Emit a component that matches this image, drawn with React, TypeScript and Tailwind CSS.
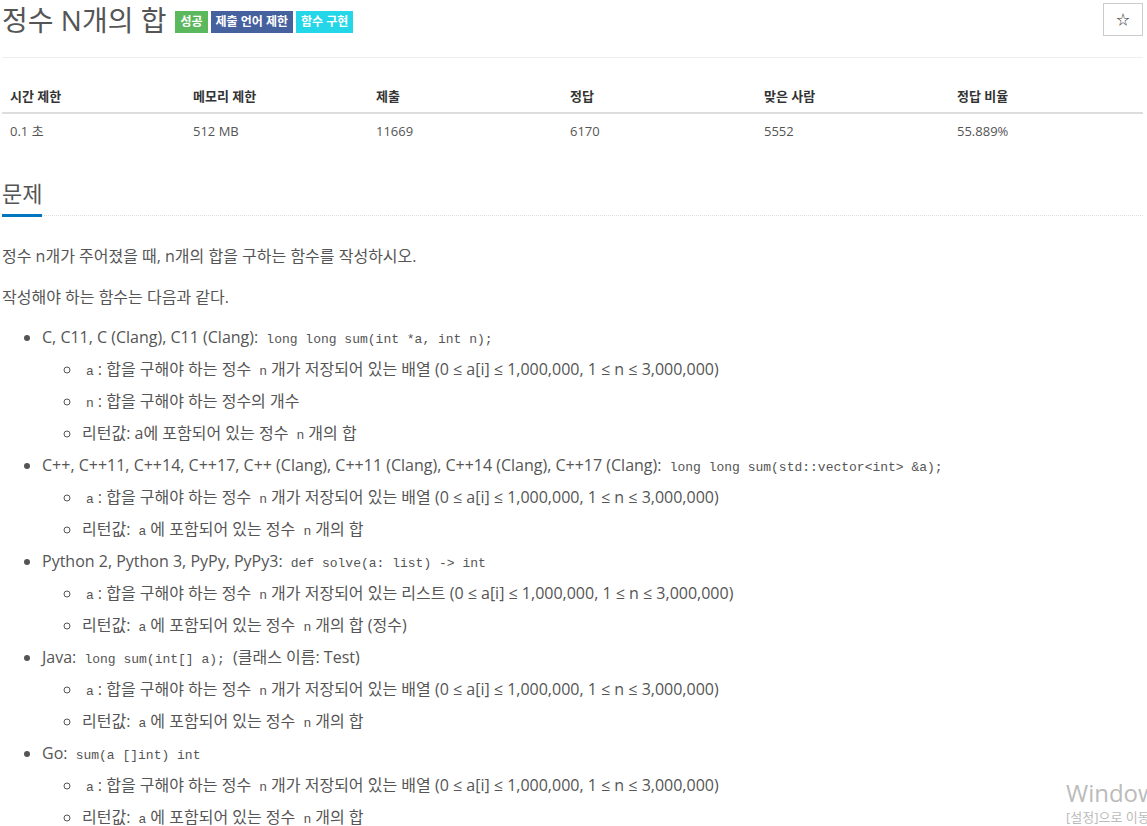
import React from "react";

// inline code in the problem text
const C = ({ children }: { children: React.ReactNode }) => (
  <code className="px-1 font-['Liberation_Mono',monospace] text-[13px] leading-none text-[#555]">{children}</code>
);

const Range = ({ list }: { list?: boolean }) => (
  <>
    <C>a</C>: 합을 구해야 하는 정수 <C>n</C>개가 저장되어 있는 {list ? "리스트" : "배열"} (0 ≤ a[i] ≤ 1,000,000, 1 ≤ n ≤ 3,000,000)
  </>
);

const Ret = ({ suffix }: { suffix?: string }) => (
  <li>
    리턴값: <C>a</C>에 포함되어 있는 정수 <C>n</C>개의 합{suffix}
  </li>
);

const stats = [
  { label: "시간 제한", value: "0.1 초", w: "w-[183px]" },
  { label: "메모리 제한", value: "512 MB", w: "w-[183px]" },
  { label: "제출", value: "11669", w: "w-[194px]" },
  { label: "정답", value: "6170", w: "w-[194px]" },
  { label: "맞은 사람", value: "5552", w: "w-[193px]" },
  { label: "정답 비율", value: "55.889%", w: "" },
];

export default function App() {
  return (
    <div className="relative h-[826px] overflow-hidden bg-white font-['Open_Sans','Noto_Sans_CJK_KR',sans-serif] text-[#555]">
      <div className="pl-[2px] pr-[4px]">
        {/* title */}
        <div className="flex items-start justify-between border-b border-[#eee] pb-[19px]">
          <div className="flex items-center pt-[2px]">
            <h1 className="text-[28px] leading-[36px] text-[#555]">정수 N개의 합</h1>
            <div className="ml-[9px] mt-[4px] flex gap-[3px] text-[12px] font-bold text-white">
              <span className="flex h-[22px] items-center bg-[#5cb85c] px-[5px]">성공</span>
              <span className="flex h-[22px] items-center bg-[#45619e] px-[5px]">제출 언어 제한</span>
              <span className="flex h-[22px] items-center bg-[#23d6e8] px-[5px]">함수 구현</span>
            </div>
          </div>
          <button className="mt-[3px] flex h-[33px] w-[40px] items-center justify-center border border-[#ccc] bg-white text-[13px] text-[#333]">
            ☆
          </button>
        </div>

        {/* stats table */}
        <table className="mt-[22px] w-full border-collapse text-left text-[13px]">
          <thead>
            <tr className="border-b-2 border-[#ddd]">
              {stats.map((s) => (
                <th key={s.label} className={`${s.w} px-2 py-[8px] font-bold leading-[16px] text-[#333]`}>
                  {s.label}
                </th>
              ))}
            </tr>
          </thead>
          <tbody>
            <tr>
              {stats.map((s) => (
                <td key={s.label} className="px-2 py-[8px] leading-[18px]">
                  {s.value}
                </td>
              ))}
            </tr>
          </tbody>
        </table>

        {/* section heading */}
        <div className="mt-[30px] border-b border-dotted border-[#ddd]">
          <h2 className="mb-[-2px] inline-block border-b-[3px] border-[#0076c0] pb-[6px] text-[22px] leading-[30px] text-[#555]">
            문제
          </h2>
        </div>

        {/* description */}
        <div className="pt-[28px] text-[16px]">
          <p className="leading-[24px]">정수 n개가 주어졌을 때, n개의 합을 구하는 함수를 작성하시오.</p>
          <p className="mt-[17px] leading-[24px]">작성해야 하는 함수는 다음과 같다.</p>
          <ul className="mt-[12px] list-disc pl-10 leading-[32px]">
            <li>
              C, C11, C (Clang), C11 (Clang): <C>long long sum(int *a, int n);</C>
              <ul className="list-[circle] pl-10">
                <li>
                  <Range />
                </li>
                <li>
                  <C>n</C>: 합을 구해야 하는 정수의 개수
                </li>
                <li>
                  리턴값: a에 포함되어 있는 정수 <C>n</C>개의 합
                </li>
              </ul>
            </li>
            <li>
              C++, C++11, C++14, C++17, C++ (Clang), C++11 (Clang), C++14 (Clang), C++17 (Clang):{" "}
              <C>long long sum(std::vector&lt;int&gt; &amp;a);</C>
              <ul className="list-[circle] pl-10">
                <li>
                  <Range />
                </li>
                <Ret />
              </ul>
            </li>
            <li>
              Python 2, Python 3, PyPy, PyPy3: <C>def solve(a: list) -&gt; int</C>
              <ul className="list-[circle] pl-10">
                <li>
                  <Range list />
                </li>
                <Ret suffix=" (정수)" />
              </ul>
            </li>
            <li>
              Java: <C>long sum(int[] a);</C> (클래스 이름: Test)
              <ul className="list-[circle] pl-10">
                <li>
                  <Range />
                </li>
                <Ret />
              </ul>
            </li>
            <li>
              Go: <C>sum(a []int) int</C>
              <ul className="list-[circle] pl-10">
                <li>
                  <Range />
                </li>
                <Ret />
              </ul>
            </li>
          </ul>
        </div>
      </div>

      {/* windows activation watermark */}
      <div className="pointer-events-none absolute left-[1066px] top-[778px] whitespace-nowrap text-[#bbb]">
        <div className="text-[24px] leading-[30px]">Windows 정품 인증</div>
        <div className="text-[13px] leading-[18px]">[설정]으로 이동하여 Windows를 정품 인증합니다.</div>
      </div>
    </div>
  );
}
